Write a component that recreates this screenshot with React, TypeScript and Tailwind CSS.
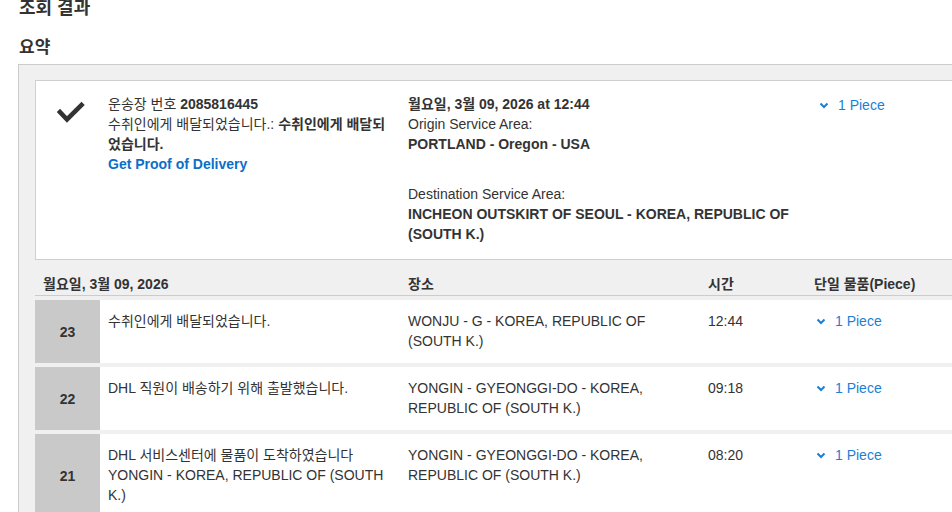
import React from "react";

const font = '"Liberation Sans", "Noto Sans CJK KR", Arial, sans-serif';

function Chevron() {
  return (
    <svg width="10" height="7" viewBox="0 0 10 7" className="shrink-0">
      <polyline points="1.5,1.5 5,5 8.5,1.5" fill="none" stroke="#1a7fd6" strokeWidth="2" />
    </svg>
  );
}

function Piece() {
  return (
    <div className="flex items-center gap-[9px] text-[#1a7fd6]">
      <Chevron />
      <span>1 Piece</span>
    </div>
  );
}

type Row = { n: string; desc: React.ReactNode; loc: string; time: string };

const rows: Row[] = [
  { n: "23", desc: "수취인에게 배달되었습니다.", loc: "WONJU - G - KOREA, REPUBLIC OF (SOUTH K.)", time: "12:44" },
  { n: "22", desc: "DHL 직원이 배송하기 위해 출발했습니다.", loc: "YONGIN - GYEONGGI-DO - KOREA, REPUBLIC OF (SOUTH K.)", time: "09:18" },
  {
    n: "21",
    desc: (
      <>
        DHL 서비스센터에 물품이 도착하였습니다
        <br />
        YONGIN - KOREA, REPUBLIC OF (SOUTH K.)
      </>
    ),
    loc: "YONGIN - GYEONGGI-DO - KOREA, REPUBLIC OF (SOUTH K.)",
    time: "08:20",
  },
];

export default function App() {
  return (
    <div
      className="w-[952px] h-[512px] overflow-hidden bg-white text-[#333] text-[14px] leading-[20px]"
      style={{ fontFamily: font }}
    >
      <div className="pl-[18px] -mt-[4px]">
        <h1 className="text-[18px] leading-[24px] font-bold pl-px">조회 결과</h1>
        <h2 className="mt-[16px] mb-[4px] text-[17px] leading-[24px] font-bold pl-px">요약</h2>

        <div className="w-[1000px] border border-[#cccccc] bg-[#f0f0f0] pt-[15px] pl-[16px] pb-[40px]">
          {/* Summary card */}
          <div className="flex bg-white border border-[#cfcfcf] pt-[13px] pb-[15px]">
            <div className="w-[72px] shrink-0 pl-[21px] pt-[7px]">
              <svg width="28" height="22" viewBox="0 0 28 22">
                <polyline
                  points="3,11 10,18.5 24.5,4"
                  fill="none"
                  stroke="#333"
                  strokeWidth="4.6"
                  strokeLinecap="square"
                />
              </svg>
            </div>
            <div className="w-[300px] shrink-0 pr-[16px]">
              <div>
                운송장 번호 <span className="font-bold">2085816445</span>
              </div>
              <div>
                수취인에게 배달되었습니다.: <span className="font-bold">수취인에게 배달되었습니다.</span>
              </div>
              <div className="font-bold text-[#0a6fc9]">Get Proof of Delivery</div>
            </div>
            <div className="w-[402px] shrink-0 pr-[6px]">
              <div className="font-bold">월요일, 3월 09, 2026 at 12:44</div>
              <div>Origin Service Area:</div>
              <div className="font-bold">PORTLAND - Oregon - USA</div>
              <div className="mt-[30px]">Destination Service Area:</div>
              <div className="font-bold">INCHEON OUTSKIRT OF SEOUL - KOREA, REPUBLIC OF (SOUTH K.)</div>
            </div>
            <div className="pl-[9px] pt-[1px]">
              <Piece />
            </div>
          </div>

          {/* Table header */}
          <div className="flex mt-[14px] pb-[1px] border-b border-[#cccccc] font-bold">
            <div className="w-[365px] shrink-0 pl-[8px]">월요일, 3월 09, 2026</div>
            <div className="w-[300px] shrink-0 pl-[8px]">장소</div>
            <div className="w-[107px] shrink-0 pl-[8px]">시간</div>
            <div className="pl-[7px]">단일 물품(Piece)</div>
          </div>

          {/* Rows */}
          <div className="flex flex-col gap-[4px] mt-[4px]">
            {rows.map((r) => (
              <div key={r.n} className="flex bg-white">
                <div className="w-[65px] shrink-0 bg-[#c9c9c9] flex items-center justify-center font-bold">
                  {r.n}
                </div>
                <div className="w-[300px] shrink-0 pl-[8px] pr-[8px] pt-[11px] pb-[12px]">{r.desc}</div>
                <div className="w-[300px] shrink-0 pl-[8px] pr-[8px] pt-[11px] pb-[12px]">{r.loc}</div>
                <div className="w-[107px] shrink-0 pl-[8px] pt-[11px] pb-[12px]">{r.time}</div>
                <div className="pl-[9px] pt-[11px] pb-[12px]">
                  <Piece />
                </div>
              </div>
            ))}
          </div>
        </div>
      </div>
    </div>
  );
}
